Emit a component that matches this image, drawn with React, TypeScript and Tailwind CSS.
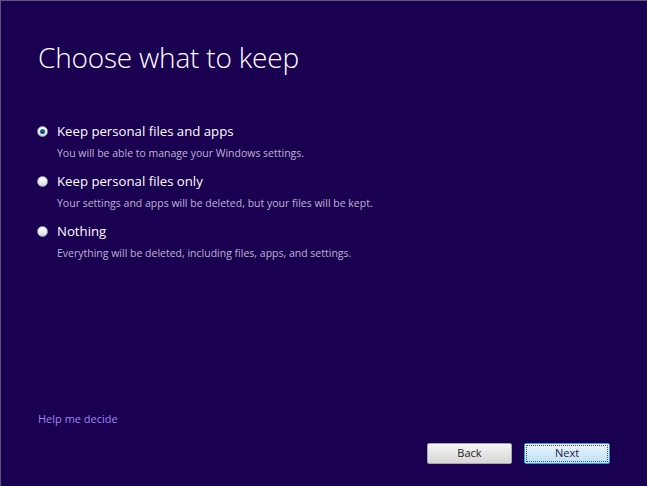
import React from "react";

const options = [
  { label: "Keep personal files and apps", desc: "You will be able to manage your Windows settings.", checked: true },
  { label: "Keep personal files only", desc: "Your settings and apps will be deleted, but your files will be kept.", checked: false },
  { label: "Nothing", desc: "Everything will be deleted, including files, apps, and settings.", checked: false },
];

function Radio({ checked }: { checked: boolean }) {
  return (
    <span className="relative flex h-[11px] w-[11px] items-center justify-center rounded-full border border-[#9aa0b0] bg-gradient-to-b from-[#ffffff] to-[#d8dce4]">
      {checked && <span className="h-[5px] w-[5px] rounded-full bg-gradient-to-b from-[#1a6fa8] to-[#0c3d66]" />}
    </span>
  );
}

export default function App() {
  return (
    <div
      className="flex h-[486px] w-[647px] flex-col border-l border-t border-[#5a5680] bg-[#1a0050] text-white"
      style={{ fontFamily: '"Open Sans", "Noto Sans", sans-serif' }}
    >
      <h1 className="ml-[37px] mt-[38px] text-[28px] font-light leading-[36px] tracking-[-0.2px] text-white">
        Choose what to keep
      </h1>
      <div className="ml-[36px] mt-[46px] flex flex-col gap-[11px]">
        {options.map((o) => (
          <div key={o.label} className="flex flex-col">
            <div className="flex items-center gap-[9px]">
              <Radio checked={o.checked} />
              <span className="text-[13.2px] leading-[20px] text-white">{o.label}</span>
            </div>
            <div className="ml-[20px] mt-[5px] text-[10.5px] leading-[14px] text-[#bcb6d4]">{o.desc}</div>
          </div>
        ))}
      </div>
      <div className="flex-1" />
      <div className="ml-[37px] text-[11px] leading-[16px] text-[#9a88f0]">Help me decide</div>
      <div className="mb-[22px] mr-[37px] mt-[16px] flex justify-end gap-[12px]">
        <button className="flex h-[21px] w-[85px] items-center justify-center rounded-[2px] border border-[#a8a8a8] bg-gradient-to-b from-[#f6f6f6] to-[#d6d6d6] text-[11px] text-[#1a1a1a]">
          Back
        </button>
        <button className="flex h-[21px] w-[86px] items-center justify-center rounded-[2px] border border-[#3c9ad8] bg-gradient-to-b from-[#eaf6fd] to-[#bfe0f3] text-[11px] text-[#2a1a4a] outline-1 outline-dotted outline-offset-[-3px] outline-[#4a4a6a]">
          Next
        </button>
      </div>
    </div>
  );
}
